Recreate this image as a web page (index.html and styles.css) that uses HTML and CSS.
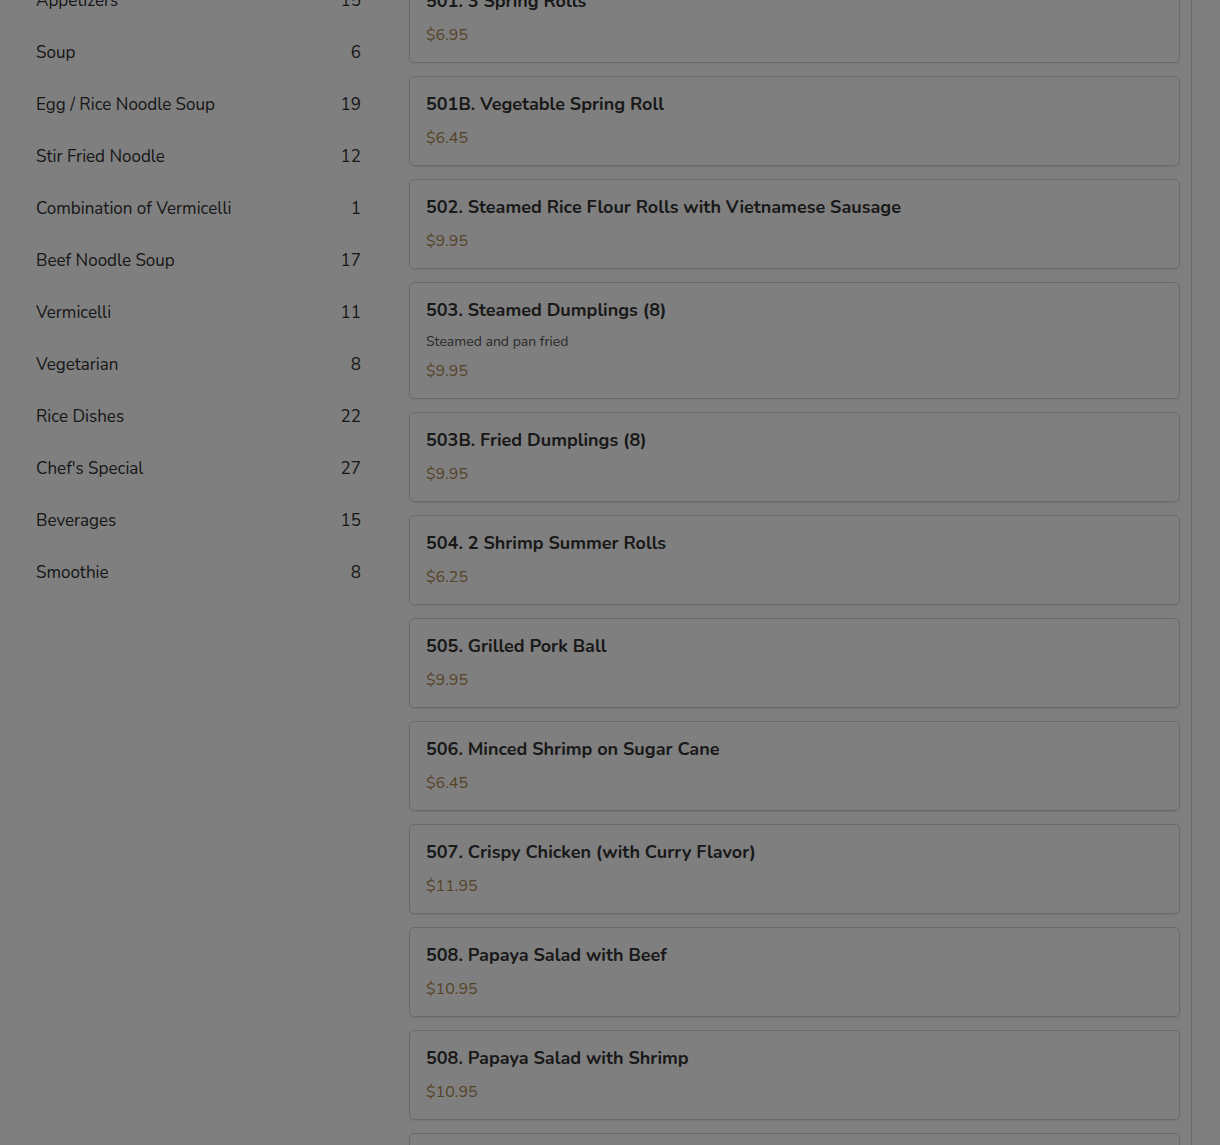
FILE: index.html
```html
<!DOCTYPE html>
<html lang="en">
<head>
<meta charset="utf-8">
<title>Menu</title>
<link rel="stylesheet" href="styles.css">
</head>
<body>
<div class="page">
  <aside class="sidebar">
    <div class="cat"><span>Appetizers</span><span>15</span></div>
    <div class="cat"><span>Soup</span><span>6</span></div>
    <div class="cat"><span>Egg / Rice Noodle Soup</span><span>19</span></div>
    <div class="cat"><span>Stir Fried Noodle</span><span>12</span></div>
    <div class="cat"><span>Combination of Vermicelli</span><span>1</span></div>
    <div class="cat"><span>Beef Noodle Soup</span><span>17</span></div>
    <div class="cat"><span>Vermicelli</span><span>11</span></div>
    <div class="cat"><span>Vegetarian</span><span>8</span></div>
    <div class="cat"><span>Rice Dishes</span><span>22</span></div>
    <div class="cat"><span>Chef's Special</span><span>27</span></div>
    <div class="cat"><span>Beverages</span><span>15</span></div>
    <div class="cat"><span>Smoothie</span><span>8</span></div>
  </aside>
  <main class="menu">
    <div class="card"><div class="title">501. 3 Spring Rolls</div><div class="price">$6.95</div></div>
    <div class="card"><div class="title">501B. Vegetable Spring Roll</div><div class="price">$6.45</div></div>
    <div class="card"><div class="title">502. Steamed Rice Flour Rolls with Vietnamese Sausage</div><div class="price">$9.95</div></div>
    <div class="card"><div class="title">503. Steamed Dumplings (8)</div><div class="desc">Steamed and pan fried</div><div class="price">$9.95</div></div>
    <div class="card"><div class="title">503B. Fried Dumplings (8)</div><div class="price">$9.95</div></div>
    <div class="card"><div class="title">504. 2 Shrimp Summer Rolls</div><div class="price">$6.25</div></div>
    <div class="card"><div class="title">505. Grilled Pork Ball</div><div class="price">$9.95</div></div>
    <div class="card"><div class="title">506. Minced Shrimp on Sugar Cane</div><div class="price">$6.45</div></div>
    <div class="card"><div class="title">507. Crispy Chicken (with Curry Flavor)</div><div class="price">$11.95</div></div>
    <div class="card"><div class="title">508. Papaya Salad with Beef</div><div class="price">$10.95</div></div>
    <div class="card"><div class="title">508. Papaya Salad with Shrimp</div><div class="price">$10.95</div></div>
    <div class="card"><div class="title">509. Shrimp Salad</div><div class="price">$10.95</div></div>
  </main>
</div>
<div class="backdrop"></div>
</body>
</html>
```

FILE: styles.css
```css
html, body {
  margin: 0;
  padding: 0;
  background: #ffffff;
  overflow: hidden;
}
body {
  font-family: "Nunito", "Lato", "Noto Sans", sans-serif;
  color: #333333;
}
.page {
  display: flex;
  align-items: flex-start;
  padding-left: 36px;
  margin-top: -27px;
  height: 1300px;
}
.sidebar {
  width: 325px;
  flex: none;
  display: flex;
  flex-direction: column;
  padding-top: 1px;
}
.cat {
  display: flex;
  justify-content: space-between;
  align-items: center;
  height: 52px;
  font-size: 17px;
  color: #2e2e2e;
}
.menu {
  width: 771px;
  margin-left: 48px;
  padding-right: 11px;
  border-right: 1px solid #cfcfcf;
  display: flex;
  flex-direction: column;
  gap: 13px;
  align-self: stretch;
}
.card {
  border: 1px solid #d4d4d4;
  border-radius: 5px;
  padding: 16px 16px 16px 16px;
  display: flex;
  flex-direction: column;
  box-shadow: 0 1px 2px rgba(0,0,0,0.08);
}
.title {
  font-size: 18px;
  line-height: 22px;
  font-weight: 700;
  color: #333333;
  margin-bottom: 12px;
}
.desc {
  font-size: 14px;
  line-height: 18px;
  color: #555555;
  margin-top: 0;
  margin-bottom: 9px;
}
.price {
  font-size: 16px;
  line-height: 22px;
  color: #ad8850;
}
.backdrop {
  position: fixed;
  inset: 0;
  background: rgba(0, 0, 0, 0.5);
}
```
